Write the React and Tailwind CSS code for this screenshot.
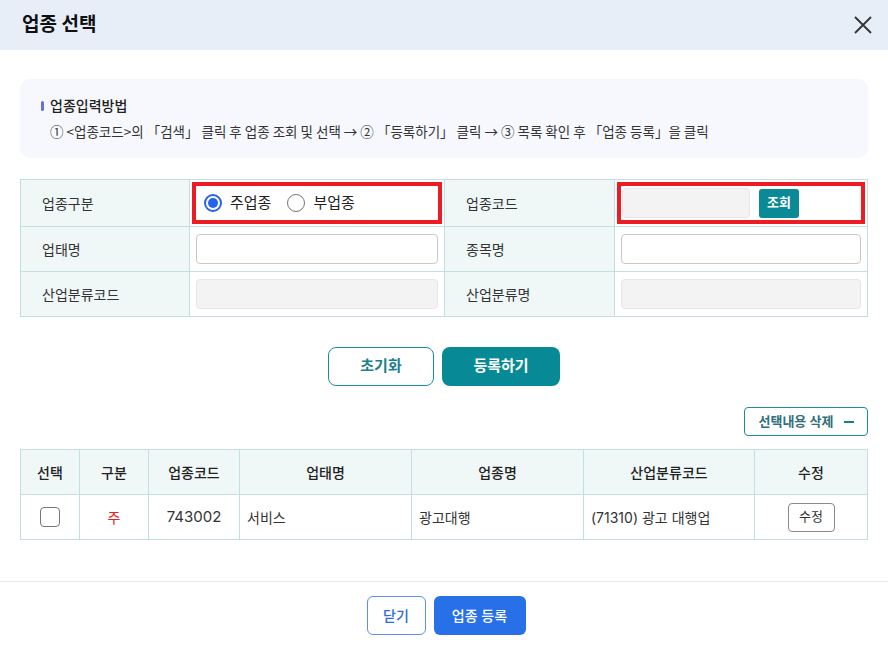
import React from "react";

const font = { fontFamily: 'Inter, "Noto Sans CJK KR", "Noto Sans", sans-serif' };
const cjk = { fontFamily: '"Noto Sans CJK KR", "Noto Sans", sans-serif' };

const Radio = ({ checked, label }) => (
  <label className="flex items-center gap-[8px] text-[15px] text-[#222]">
    <span
      className={
        checked
          ? "w-[18px] h-[18px] rounded-full border-2 border-[#2563eb] flex items-center justify-center"
          : "w-[18px] h-[18px] rounded-full border border-[#777]"
      }
    >
      {checked && <span className="w-[10px] h-[10px] rounded-full bg-[#2563eb]" />}
    </span>
    {label}
  </label>
);

const App = () => {
  return (
    <div className="w-[888px] h-[649px] bg-white flex flex-col overflow-hidden" style={font}>
      {/* HEADER */}
      <div className="h-[50px] bg-[#e8eef8] flex items-center justify-between pl-[22px] pr-[14px] shrink-0">
        <h2 className="text-[19px] font-bold text-[#111]">업종 선택</h2>
        <svg width="22" height="22" viewBox="0 0 22 22" fill="none" stroke="#333" strokeWidth="1.8">
          <path d="M3 3 L19 19 M19 3 L3 19" />
        </svg>
      </div>

      {/* BODY */}
      <div className="flex-1 px-[20px] pt-[29px]">
        <div className="bg-[#f6f8fe] rounded-[10px] h-[79px] pl-[21px] pt-[16px]">
          <div className="flex items-center gap-[6px] text-[14px] font-medium text-[#222] leading-[22px]">
            <span className="w-[3px] h-[10px] bg-[#6b6fd8] rounded-sm" />
            업종입력방법
          </div>
          <p className="pl-[9px] text-[13.5px] text-[#333] leading-[22px] mt-[3px]" style={cjk}>
            ① &lt;업종코드&gt;의 「검색」 클릭 후 업종 조회 및 선택 → ② 「등록하기」 클릭 → ③ 목록 확인 후 「업종 등록」을 클릭
          </p>
        </div>

        {/* FORM */}
        <table className="w-full mt-[21px] border-collapse text-[14px] text-[#333]">
          <colgroup>
            <col className="w-[169px]" />
            <col className="w-[255px]" />
            <col className="w-[170px]" />
            <col />
          </colgroup>
          <tbody>
            <tr className="h-[47px]">
              <td className="border border-[#c3dfe2] bg-[#eff7f7] pl-[21px]">업종구분</td>
              <td className="border border-[#c3dfe2] p-[2px]">
                <div className="h-[42px] border-[4px] border-[#ed1c24] flex items-center gap-[16px] pl-[8px]">
                  <Radio checked label="주업종" />
                  <Radio label="부업종" />
                </div>
              </td>
              <td className="border border-[#c3dfe2] bg-[#eff7f7] pl-[21px]">업종코드</td>
              <td className="border border-[#c3dfe2] p-[2px]">
                <div className="h-[42px] border-[4px] border-[#ed1c24] flex items-center gap-[9px] pl-[1px]">
                  <div className="w-[128px] h-[30px] bg-[#f3f3f3] border border-[#e6e6e6] rounded-[4px]" />
                  <button className="h-[29px] px-[8px] bg-[#0a8a96] text-white text-[13px] font-semibold rounded-[3px]">
                    조회
                  </button>
                </div>
              </td>
            </tr>
            <tr className="h-[45px]">
              <td className="border border-[#c3dfe2] bg-[#eff7f7] pl-[21px]">업태명</td>
              <td className="border border-[#c3dfe2] px-[6px]">
                <div className="h-[30px] bg-white border border-[#c8c8c8] rounded-[4px]" />
              </td>
              <td className="border border-[#c3dfe2] bg-[#eff7f7] pl-[21px]">종목명</td>
              <td className="border border-[#c3dfe2] px-[6px]">
                <div className="h-[30px] bg-white border border-[#c8c8c8] rounded-[4px]" />
              </td>
            </tr>
            <tr className="h-[45px]">
              <td className="border border-[#c3dfe2] bg-[#eff7f7] pl-[21px]">산업분류코드</td>
              <td className="border border-[#c3dfe2] px-[6px]">
                <div className="h-[30px] bg-[#f3f3f3] border border-[#e6e6e6] rounded-[4px]" />
              </td>
              <td className="border border-[#c3dfe2] bg-[#eff7f7] pl-[21px]">산업분류명</td>
              <td className="border border-[#c3dfe2] px-[6px]">
                <div className="h-[30px] bg-[#f3f3f3] border border-[#e6e6e6] rounded-[4px]" />
              </td>
            </tr>
          </tbody>
        </table>

        {/* ACTIONS */}
        <div className="flex justify-center gap-[8px] mt-[30px]">
          <button className="w-[106px] h-[39px] border border-[#1a8e9c] rounded-[8px] text-[#1a7f8c] text-[15px] font-semibold">
            초기화
          </button>
          <button className="w-[118px] h-[39px] bg-[#078a96] rounded-[8px] text-white text-[15px] font-semibold">
            등록하기
          </button>
        </div>

        <div className="flex justify-end mt-[21px]">
          <button className="h-[29px] w-[124px] border border-[#1a8e9c] rounded-[4px] text-[#2f6f7a] text-[13px] font-semibold flex items-center justify-center gap-[10px]">
            선택내용 삭제
            <span className="w-[10px] h-[2px] bg-[#1a7f8c]" />
          </button>
        </div>

        {/* TABLE */}
        <table className="w-full mt-[13px] border-collapse text-[14px] text-[#333]">
          <colgroup>
            <col className="w-[59px]" />
            <col className="w-[69px]" />
            <col className="w-[91px]" />
            <col className="w-[172px]" />
            <col className="w-[172px]" />
            <col className="w-[171px]" />
            <col />
          </colgroup>
          <thead>
            <tr className="h-[45px] bg-[#eff7f7] text-[#222]">
              <th className="border border-[#c3dfe2] font-medium">선택</th>
              <th className="border border-[#c3dfe2] font-medium">구분</th>
              <th className="border border-[#c3dfe2] font-medium">업종코드</th>
              <th className="border border-[#c3dfe2] font-medium">업태명</th>
              <th className="border border-[#c3dfe2] font-medium">업종명</th>
              <th className="border border-[#c3dfe2] font-medium">산업분류코드</th>
              <th className="border border-[#c3dfe2] font-medium">수정</th>
            </tr>
          </thead>
          <tbody>
            <tr className="h-[45px]">
              <td className="border border-[#c3dfe2]">
                <div className="w-[20px] h-[20px] mx-auto border border-[#777] rounded-[4px] bg-white" />
              </td>
              <td className="border border-[#c3dfe2] text-center text-[#e8201c]">주</td>
              <td className="border border-[#c3dfe2] text-center text-[15px]">743002</td>
              <td className="border border-[#c3dfe2] pl-[7px]">서비스</td>
              <td className="border border-[#c3dfe2] pl-[7px]">광고대행</td>
              <td className="border border-[#c3dfe2] pl-[7px]">(71310) 광고 대행업</td>
              <td className="border border-[#c3dfe2] text-center">
                <button className="w-[47px] h-[29px] border border-[#8a8a8a] rounded-[4px] text-[13px] text-[#333] bg-white">
                  수정
                </button>
              </td>
            </tr>
          </tbody>
        </table>
      </div>

      {/* FOOTER */}
      <div className="h-[68px] border-t border-[#e6eaf2] flex items-center justify-center gap-[8px] pl-[4px] shrink-0">
        <button className="w-[59px] h-[39px] border border-[#5b8ff0] rounded-[6px] text-[#2a6be0] text-[14px] font-medium">
          닫기
        </button>
        <button className="w-[92px] h-[39px] bg-[#2870e8] rounded-[6px] text-white text-[14px] font-medium">
          업종 등록
        </button>
      </div>
    </div>
  );
};

export default App;
